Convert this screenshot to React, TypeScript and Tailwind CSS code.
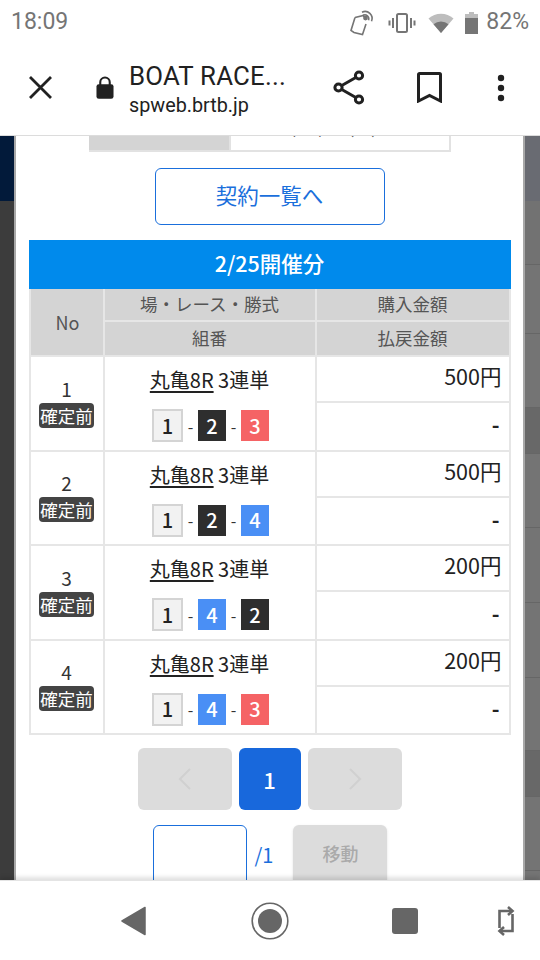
const FONT = "font-['Roboto','Noto_Sans_CJK_JP',sans-serif]";
const JP = "font-['Noto_Sans_CJK_JP',sans-serif]";

type Bet = { no: number; boats: number[]; amount: string };

const bets: Bet[] = [
  { no: 1, boats: [1, 2, 3], amount: "500円" },
  { no: 2, boats: [1, 2, 4], amount: "500円" },
  { no: 3, boats: [1, 4, 2], amount: "200円" },
  { no: 4, boats: [1, 4, 3], amount: "200円" },
];

// page rows dimmed behind the modal, showing through on the right edge
const backdropRows = [
  { h: "h-[64px]", bg: "bg-[#727272]" },
  { h: "h-[69px]", bg: "bg-[#747474]" },
  { h: "h-[74px]", bg: "bg-[#747474]" },
  { h: "h-[46px]", bg: "bg-[#686868]" },
  { h: "h-[74px]", bg: "bg-[#747474]" },
  { h: "h-[75px]", bg: "bg-[#747474]" },
  { h: "h-[75px]", bg: "bg-[#747474]" },
  { h: "h-[73px]", bg: "bg-[#747474]" },
  { h: "h-[46px]", bg: "bg-[#686868]" },
  { h: "h-[74px]", bg: "bg-[#747474]" },
];

function StatusBar() {
  return (
    <div className="flex h-[45px] shrink-0 items-center justify-between bg-white pl-[11px] pr-[11px] text-[23px] text-[#757575]">
      <span>18:09</span>
      <div className="flex items-center">
        <svg width="26" height="28" viewBox="0 0 26 28" fill="none" stroke="#757575" strokeWidth="1.6">
          <path d="M6 8.500 L14.500 6.500 L15 8 M17 15 L13.500 25.500 L5 23.500 L2 21.500 L6 8.500" />
          <path d="M13 3.200a7 7 0 0 1 9.500 9" />
          <path d="M14 6.200a4 4 0 0 1 5.500 5" />
          <circle cx="16.500" cy="9" r="1.600" fill="#757575" />
        </svg>
        <svg className="ml-[13px]" width="28" height="22" viewBox="0 0 28 22" fill="none" stroke="#757575" strokeWidth="2">
          <rect x="9" y="2" width="10" height="18" rx="1.500" />
          <path d="M5 6v10M1.500 8.500v5M23 6v10M26.500 8.500v5" />
        </svg>
        <svg className="ml-[12px]" width="26" height="22" viewBox="0 0 26 22">
          <path d="M0.500 6.500A19 19 0 0 1 25.500 6.500L13 21Z" fill="#bdbdbd" />
          <path d="M5.500 12.300A11.500 11.500 0 0 1 20.500 12.300L13 21Z" fill="#757575" />
        </svg>
        <svg className="ml-[11px]" width="13" height="22" viewBox="0 0 13 22">
          <path d="M4 0h5v2h4v20H0V2h4Z" fill="#bdbdbd" />
          <path d="M0 6h13v16H0Z" fill="#757575" />
        </svg>
        <span className="ml-[8px]">82%</span>
      </div>
    </div>
  );
}

function Toolbar() {
  return (
    <div className="flex h-[91px] shrink-0 items-center border-b border-[#dcdcdc] bg-white pb-[5px] text-[#212121]">
      <svg className="ml-[28px]" width="25" height="25" viewBox="0 0 25 25" stroke="#212121" strokeWidth="2.800" fill="none">
        <path d="M2 2L23 23M23 2L2 23" />
      </svg>
      <svg className="ml-[43px]" width="18" height="25" viewBox="0 0 19 25">
        <path d="M4.500 10V7a5 5 0 0 1 10 0v3" fill="none" stroke="#212121" strokeWidth="2.200" />
        <rect x="0.500" y="9" width="18" height="15.500" rx="2.500" fill="#212121" />
      </svg>
      <div className="ml-[15px] flex w-[190px] flex-col pt-[3px]">
        <span className="text-[25.800px] leading-[30px] tracking-[0.2px]">BOAT RACE...</span>
        <span className="mt-[3px] text-[19.800px] leading-[24px]">spweb.brtb.jp</span>
      </div>
      <svg className="ml-[14px]" width="32" height="35" viewBox="0 0 32 35" fill="none" stroke="#212121" strokeWidth="3">
        <circle cx="5.500" cy="17.500" r="3.600" />
        <circle cx="26" cy="5.500" r="3.600" />
        <circle cx="26" cy="29.500" r="3.600" />
        <path d="M8.800 15.500L22.800 7.500M8.800 19.500L22.800 27.500" />
      </svg>
      <svg className="ml-[52px]" width="25" height="31" viewBox="0 0 25 31" fill="none" stroke="#212121" strokeWidth="3">
        <path d="M1.500 29V2.500a1 1 0 0 1 1-1h20a1 1 0 0 1 1 1V29L12.500 23.500Z" />
      </svg>
      <svg className="ml-[55px]" width="8" height="28" viewBox="0 0 8 28" fill="#212121">
        <circle cx="4" cy="4" r="3.200" />
        <circle cx="4" cy="14" r="3.200" />
        <circle cx="4" cy="24" r="3.200" />
      </svg>
    </div>
  );
}

function Boat({ n }: { n: number }) {
  if (n === 1) {
    return (
      <span className="flex h-[33px] w-[31px] items-center justify-center border-2 border-[#d4d4d4] bg-[#f2f2f2] text-[#222]">
        {n}
      </span>
    );
  }
  const color = n === 2 ? "bg-[#2e2e2e]" : n === 3 ? "bg-[#f56365]" : "bg-[#4a8ff5]";
  return <span className={`flex h-[31px] w-[28px] items-center justify-center text-white ${color}`}>{n}</span>;
}

function BetRow({ bet }: { bet: Bet }) {
  return (
    <div className="grid h-[94.500px] grid-cols-[76px_210px_1fr] border-b-2 border-[#e6e6e6]">
      <div className="flex flex-col items-center justify-center border-x-2 border-[#e6e6e6] text-[#333]">
        <span className="h-[24px] text-[19px] leading-[20px]">{bet.no}</span>
        <span className="rounded-[4px] bg-[#444] px-[1px] text-[17.500px] leading-[25px] text-white">確定前</span>
      </div>
      <div className="flex flex-col items-center">
        <div className="mt-[9px] text-[20px] leading-[28px] text-[#222]">
          <span className="underline underline-offset-[3px]">丸亀8R</span> 3連単
        </div>
        <div className="mt-[15px] flex items-center pl-[2px] text-[20px] font-medium">
          <Boat n={bet.boats[0]} />
          <span className="w-[15px] text-center text-[16px] font-normal text-[#333]">-</span>
          <Boat n={bet.boats[1]} />
          <span className="w-[15px] text-center text-[16px] font-normal text-[#333]">-</span>
          <Boat n={bet.boats[2]} />
        </div>
      </div>
      <div className="flex flex-col border-x-2 border-[#e6e6e6] text-right text-[#222]">
        <div className="h-[46px] border-b-2 border-[#e6e6e6] pr-[7px] pt-[3px] text-[21.500px] leading-[32px]">{bet.amount}</div>
        <div className="flex-1 pr-[9px] pt-[5px] text-[21px] font-bold leading-[32px]">-</div>
      </div>
    </div>
  );
}

function Pager() {
  return (
    <div className="mt-[13px] flex gap-[7px]">
      <div className="flex h-[62px] w-[94px] items-center justify-center rounded-[6px] bg-[#dcdcdc]">
        <svg width="14" height="22" viewBox="0 0 14 22" fill="none" stroke="#d0d0d0" strokeWidth="2">
          <path d="M12 1L2 11L12 21" />
        </svg>
      </div>
      <div className="flex h-[62px] w-[62px] items-center justify-center rounded-[6px] bg-[#1868dc] text-[22px] font-medium text-white">
        1
      </div>
      <div className="flex h-[62px] w-[94px] items-center justify-center rounded-[6px] bg-[#dcdcdc]">
        <svg width="14" height="22" viewBox="0 0 14 22" fill="none" stroke="#d0d0d0" strokeWidth="2">
          <path d="M2 1L12 11L2 21" />
        </svg>
      </div>
    </div>
  );
}

function Modal() {
  return (
    <div className={`flex h-full w-[511px] flex-col items-center overflow-hidden border-x-2 border-x-[#a8a8a8] bg-white ${JP}`}>
      {/* row cut off by the toolbar */}
      <div className="flex h-[16px] w-[362px] shrink-0 overflow-hidden border-b-2 border-[#e2e2e2] text-[17px] leading-[24px] text-[#555]">
        <div className="w-[140px] overflow-hidden bg-[#d4d4d4] text-center">
          <div className="-mt-[21px]">契約受付日時</div>
        </div>
        <div className="flex-1 overflow-hidden border-x-2 border-[#e2e2e2] text-center">
          <div className="-mt-[21px]">2021/02/25 (木) 14:21</div>
        </div>
      </div>
      <button className="mt-[16px] h-[57px] w-[230px] shrink-0 rounded-[6px] border-[1.500px] border-[#1a6fdc] pb-[3px] text-[21.500px] text-[#1a6fdc]">
        契約一覧へ
      </button>
      <div className="mt-[15px] flex h-[49px] w-[482px] shrink-0 items-center justify-center bg-[#008aec] pb-[3px] text-[21.500px] font-medium text-white">
        2/25開催分
      </div>
      <div className="w-[482px] shrink-0">
        <div className="grid grid-cols-[74px_212px_1fr] border-x-2 border-b-2 border-[#e6e6e6] bg-[#d4d4d4] text-[17.500px] text-[#555]">
          <div className="row-span-2 flex items-center justify-center border-r-2 border-[#e6e6e6] pl-[2px] text-[18px]">No</div>
          <div className="flex h-[33px] items-center justify-center border-b-2 border-r-2 border-[#e6e6e6]">場・レース・勝式</div>
          <div className="flex h-[33px] items-center justify-center border-b-2 border-[#e6e6e6]">購入金額</div>
          <div className="flex h-[33px] items-center justify-center border-r-2 border-[#e6e6e6]">組番</div>
          <div className="flex h-[33px] items-center justify-center">払戻金額</div>
        </div>
        {bets.map((bet) => (
          <BetRow key={bet.no} bet={bet} />
        ))}
      </div>
      <Pager />
      <div className="mt-[15px] flex items-start pl-[1px]">
        <div className="h-[62px] w-[94px] rounded-[6px] border-[1.500px] border-[#1a6fdc] bg-white" />
        <span className="ml-[8px] mt-[17px] text-[20px] leading-[26px] text-[#1a6fdc]">/1</span>
        <div className="ml-[20px] flex h-[62px] w-[94px] items-center justify-center rounded-[6px] bg-[#dcdcdc] pb-[5px] text-[18px] font-medium text-[#aaa] shadow-sm">
          移動
        </div>
      </div>
    </div>
  );
}

function NavBar() {
  return (
    <div className="relative flex h-[80px] shrink-0 items-center border-t border-[#e4e4e4] bg-white shadow-[0_-3px_4px_rgba(0,0,0,0.12)]">
      <svg className="ml-[121px]" width="25" height="30" viewBox="0 0 25 30" fill="#666">
        <path d="M24 1.500V28.500L1 15Z" stroke="#666" strokeLinejoin="round" strokeWidth="1.500" />
      </svg>
      <svg className="ml-[105px]" width="38" height="38" viewBox="0 0 38 38">
        <circle cx="19" cy="19" r="17.800" fill="none" stroke="#666" strokeWidth="1.600" />
        <circle cx="19" cy="19" r="12" fill="#666" />
      </svg>
      <div className="ml-[103px] h-[26px] w-[26px] rounded-[3px] bg-[#666]" />
      <svg className="ml-[79px]" width="18" height="30" viewBox="0 0 18 30" fill="none" stroke="#666" strokeWidth="2.600">
        <path d="M14 5H2.500V22" />
        <path d="M11 1L15.500 5L11 9" />
        <path d="M4 25H15.500V8" />
        <path d="M7 21L2.500 25L7 29" />
      </svg>
    </div>
  );
}

export default function App() {
  return (
    <div className={`flex h-[960px] w-[540px] flex-col overflow-hidden bg-white ${FONT}`}>
      <StatusBar />
      <Toolbar />
      <div className="flex min-h-0 flex-1">
        <div className="flex w-[14px] shrink-0 flex-col bg-[#3c3c3c]">
          <div className="h-[65px] bg-[#021a3a]" />
        </div>
        <Modal />
        <div className="flex min-w-0 flex-1 flex-col overflow-hidden bg-[#747474]">
          <div className="h-[65px] shrink-0 bg-[#696b72]" />
          {backdropRows.map((row, i) => (
            <div key={i} className={`shrink-0 border-b border-[#666] ${row.h} ${row.bg}`} />
          ))}
        </div>
      </div>
      <NavBar />
    </div>
  );
}
